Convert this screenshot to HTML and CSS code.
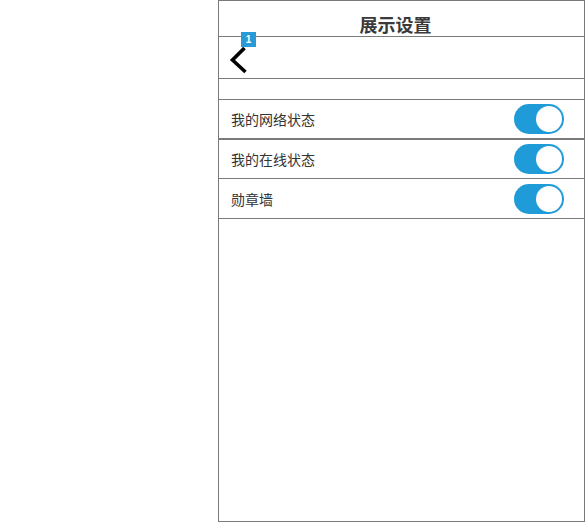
FILE: index.html
```html
<!DOCTYPE html>
<html lang="zh">
<head>
<meta charset="utf-8">
<title>展示设置</title>
<link rel="stylesheet" href="styles.css">
</head>
<body>
<div class="phone">
  <header class="title-bar">展示设置</header>
  <nav class="nav-bar">
    <span class="back">
      <svg width="20" height="28" viewBox="0 0 20 28"><path d="M15.5 2 L3.5 14 L16.5 26" fill="none" stroke="#000" stroke-width="3.6"/></svg>
      <span class="badge">1</span>
    </span>
  </nav>
  <div class="spacer"></div>
  <div class="row first"><span class="label">我的网络状态</span><span class="toggle"><span class="knob"></span></span></div>
  <div class="row thick"><span class="label">我的在线状态</span><span class="toggle"><span class="knob"></span></span></div>
  <div class="row last"><span class="label">勋章墙</span><span class="toggle"><span class="knob"></span></span></div>
</div>
</body>
</html>
```

FILE: styles.css
```css
* { box-sizing: border-box; }
html, body { margin: 0; padding: 0; background: #fff; }
body {
  font-family: "Noto Sans CJK SC", "Noto Sans", sans-serif;
  color: #333;
}
.phone {
  margin-left: 218px;
  width: 367px;
  height: 522px;
  border: 1px solid #7a7a7a;
  display: flex;
  flex-direction: column;
}
.title-bar {
  height: 36px;
  border-bottom: 1px solid #7a7a7a;
  display: flex;
  align-items: center;
  justify-content: center;
  padding-right: 12px;
  padding-top: 10px;
  font-size: 18px;
  font-weight: bold;
  color: #3a3a3a;
  line-height: 1;
}
.nav-bar {
  height: 42px;
  border-bottom: 1px solid #7a7a7a;
  display: flex;
  align-items: center;
  padding-left: 10px;
}
.back {
  position: relative;
  display: flex;
  margin-top: 4px;
}
.badge {
  position: absolute;
  left: 12px;
  top: -14px;
  width: 15px;
  height: 15px;
  background: #2a9ad6;
  color: #fff;
  font-family: "Liberation Sans", sans-serif;
  font-size: 10px;
  font-weight: bold;
  display: flex;
  align-items: center;
  justify-content: center;
}
.spacer {
  height: 21px;
  border-bottom: 1px solid #7a7a7a;
}
.row {
  height: 40px;
  border-bottom: 1px solid #7a7a7a;
  display: flex;
  align-items: center;
  justify-content: space-between;
  padding: 0 20px 0 12px;
}
.row.first { height: 39px; }
.row.thick { border-top: 1px solid #7a7a7a; height: 40px; }
.label {
  font-size: 14px;
  color: #333;
}
.toggle {
  width: 50px;
  height: 30px;
  border-radius: 15px;
  background: #1f9bd7;
  display: flex;
  align-items: center;
  justify-content: flex-end;
  padding-right: 2px;
}
.knob {
  width: 26px;
  height: 26px;
  border-radius: 50%;
  background: #fff;
}
```
